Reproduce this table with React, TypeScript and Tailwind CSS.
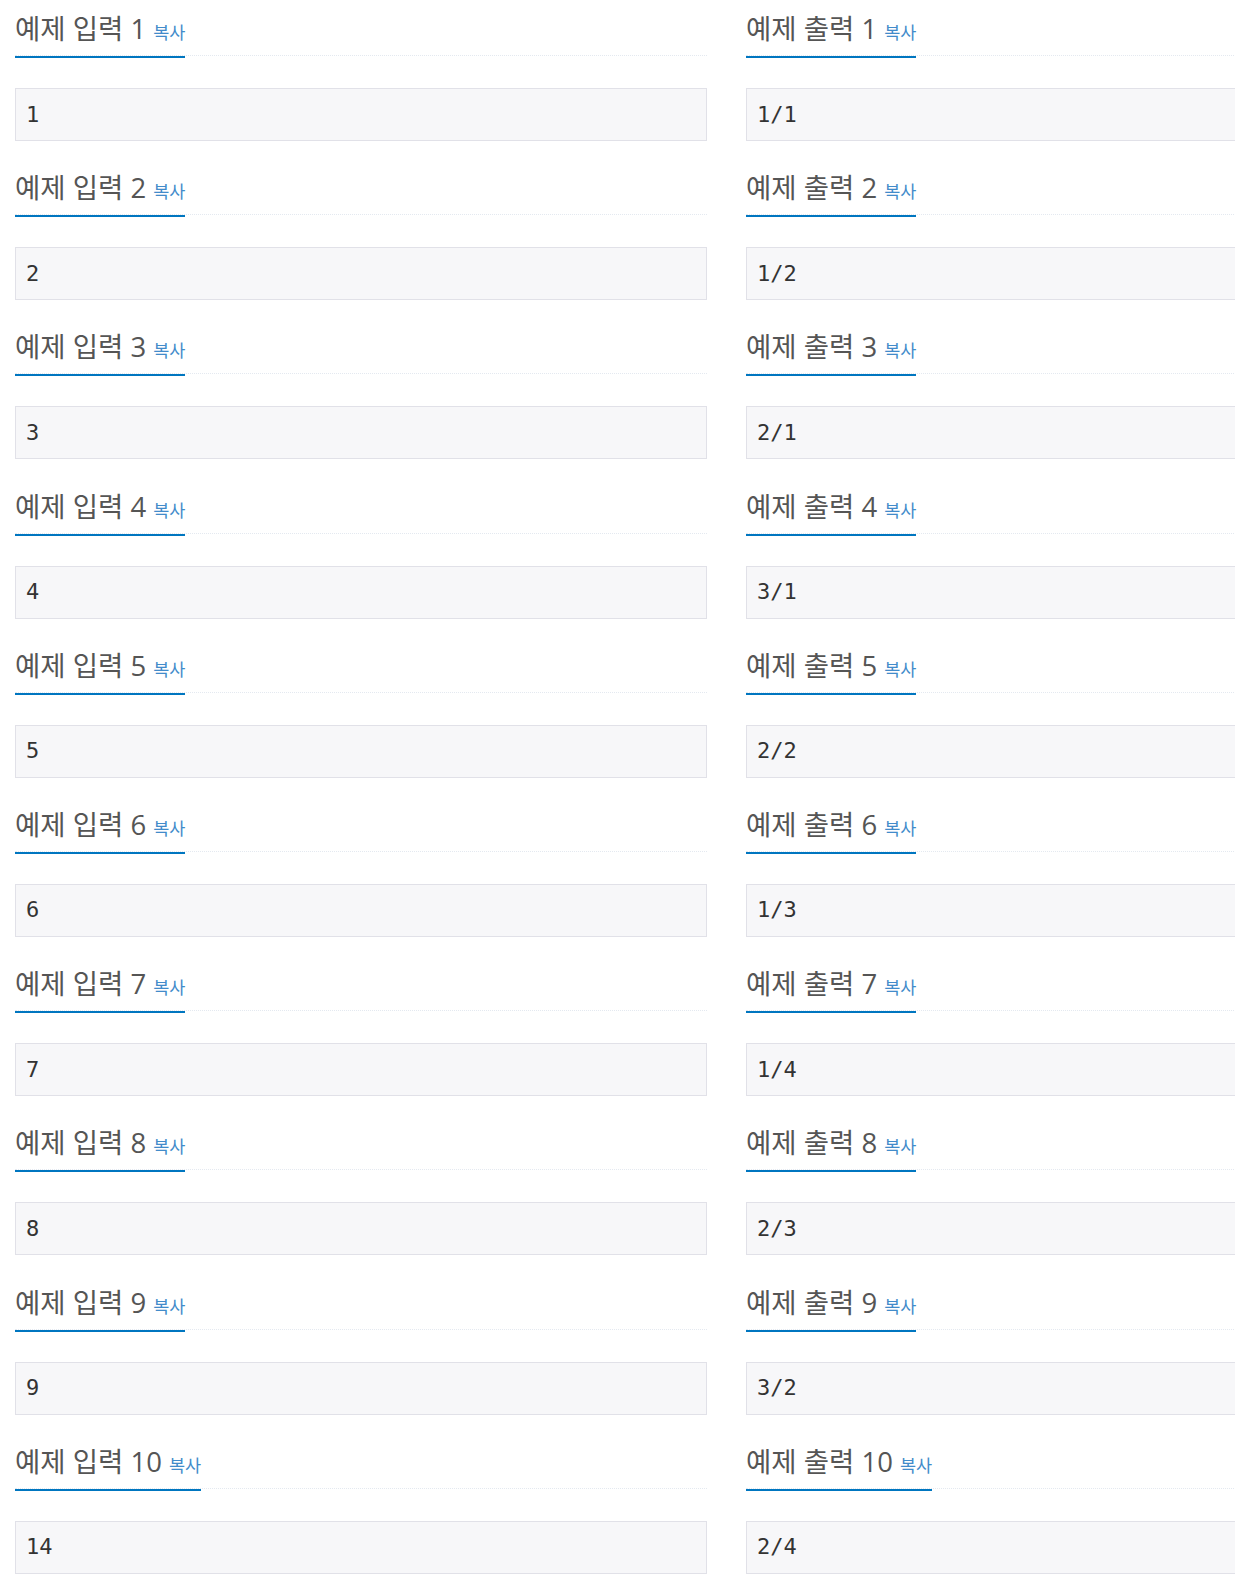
import React from "react";

const inputs = ["1", "2", "3", "4", "5", "6", "7", "8", "9", "14"];
const outputs = ["1/1", "1/2", "2/1", "3/1", "2/2", "1/3", "1/4", "2/3", "3/2", "2/4"];

function Section({ title, value }: { title: string; value: string }) {
  return (
    <div className="pt-[11px] pb-[18.2px]">
      <div className="flex items-end border-b border-dotted border-[#e4e9f0] mb-[32px]">
        <h2
          className="inline-block -mb-[3px] pb-[9px] border-b-2 border-[#0076c0] text-[27.5px] leading-[36px] h-[47px] font-normal text-[#555555] whitespace-nowrap"
          style={{ fontFamily: '"Open Sans", "Noto Sans CJK KR", sans-serif' }}
        >
          {title}
          <span
            className="ml-[7px] text-[17.5px] leading-none text-[#428bca] align-baseline"
            style={{ fontFamily: '"Open Sans", "Noto Sans CJK KR", sans-serif' }}
          >
            복사
          </span>
        </h2>
      </div>
      <pre
        className="m-0 border border-[#e1e1e8] bg-[#f7f7f9] px-[10px] py-[9.5px] text-[22px] leading-[32px] text-[#333333] h-[53px] overflow-hidden"
        style={{ fontFamily: '"DejaVu Sans Mono", "Liberation Mono", monospace' }}
      >
        {value}
      </pre>
    </div>
  );
}

export default function App() {
  return (
    <div className="w-full overflow-hidden bg-white">
      <div className="grid grid-cols-[692px_692px] gap-x-[39px] pl-[15px] w-[1500px]">
        <div className="flex flex-col">
          {inputs.map((v, i) => (
            <Section key={i} title={`예제 입력 ${i + 1}`} value={v} />
          ))}
        </div>
        <div className="flex flex-col">
          {outputs.map((v, i) => (
            <Section key={i} title={`예제 출력 ${i + 1}`} value={v} />
          ))}
        </div>
      </div>
    </div>
  );
}
